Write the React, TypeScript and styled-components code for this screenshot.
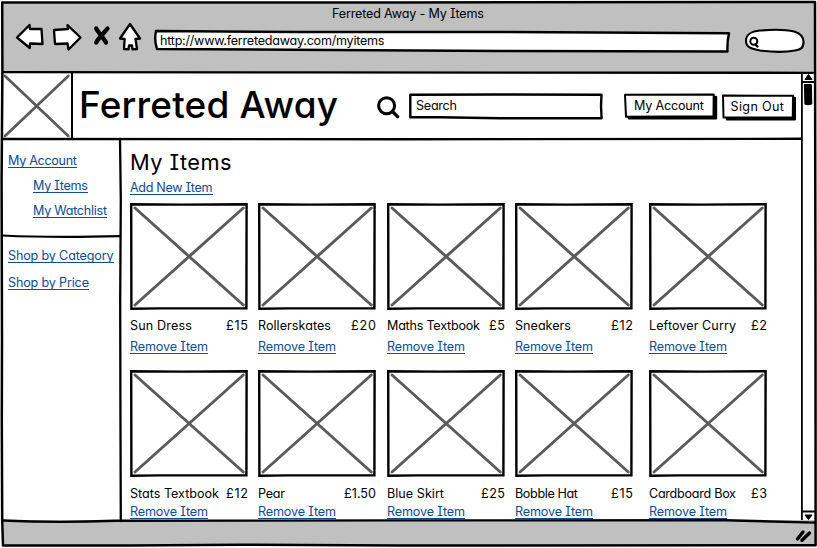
import React, { useLayoutEffect, useRef, useState } from "react";
import styled, { createGlobalStyle } from "styled-components";

const GlobalStyle = createGlobalStyle`
  *, *::before, *::after { box-sizing: border-box; }
  body { margin: 0; background: #fff; overflow: hidden; }
`;

/* ---------- text ---------- */

const TextSpan = styled.span<{ $size: number; $weight: number }>`
  display: inline-block;
  white-space: nowrap;
  font-size: ${(p) => p.$size}px;
  font-weight: ${(p) => p.$weight};
`;

type FitProps = { children: string; width: number; size?: number; weight?: number };

/* Spaces the letters so that the line takes the given width. */
function Fit({ children, width, size = 12.6, weight = 420 }: FitProps) {
  const ref = useRef<HTMLSpanElement>(null);
  const [spacing, setSpacing] = useState(0);
  useLayoutEffect(() => {
    if (!ref.current) return;
    const natural = ref.current.getBoundingClientRect().width;
    setSpacing((s) => s + (width - natural) / (children.length - 1 || 1));
  }, [children, width, size, weight]);
  return (
    <TextSpan
      ref={ref}
      $size={size}
      $weight={weight}
      style={{ letterSpacing: spacing, marginRight: -spacing }}
    >
      {children}
    </TextSpan>
  );
}

/* ---------- window ---------- */

const Window = styled.div`
  position: relative;
  display: flex;
  flex-direction: column;
  width: 817px;
  height: 548px;
  padding: 2px;
  overflow: hidden;
  color: #000;
  background: #fff;
  font-family: Inter, "Open Sans", sans-serif;
  font-size: 12.6px;
  font-feature-settings: "cv11" 1, "cv08" 1, "kern" 1;
  line-height: 16px;
`;

const Overlay = styled.svg`
  position: absolute;
  inset: 0;
  width: 100%;
  height: 100%;
  pointer-events: none;
  fill: none;
  stroke: #000;
  stroke-linecap: round;
  stroke-linejoin: round;
`;

const Chrome = styled.div`
  height: 70px;
  flex: none;
  background: #c0c0c0;
  padding-top: 4px;
`;

const WindowTitle = styled.div`
  text-align: center;
  height: 17px;
  padding-right: 1px;
`;

const Toolbar = styled.div`
  display: flex;
  align-items: flex-start;
  height: 34px;
`;

const NavIcons = styled.svg`
  flex: none;
  width: 151px;
  height: 34px;
  fill: #fff;
  stroke: #000;
  stroke-width: 2.3;
  stroke-linejoin: round;
  stroke-linecap: round;
`;

const Sketched = styled.div<{ $w: number; $h: number }>`
  position: relative;
  flex: none;
  width: ${(p) => p.$w}px;
  height: ${(p) => p.$h}px;
`;

const Sketch = styled.svg`
  position: absolute;
  inset: 0;
  width: 100%;
  height: 100%;
  overflow: visible;
  fill: #fff;
  stroke: #000;
  stroke-width: 2.4;
  stroke-linejoin: round;
  stroke-linecap: round;
`;

const Label = styled.div<{ $left: number; $top: number }>`
  position: relative;
  padding: ${(p) => p.$top}px 0 0 ${(p) => p.$left}px;
`;

const AddressBar = styled(Sketched)`
  margin-top: 7px;
`;

const ChromeSearch = styled(Sketched)`
  margin: 6px 0 0 15px;
`;

/* ---------- page ---------- */

const Viewport = styled.div`
  display: flex;
  flex: none;
  height: 448px;
  overflow: hidden;
`;

const Page = styled.div`
  width: 799px;
  flex: none;
  display: flex;
  flex-direction: column;
`;

const Header = styled.header`
  display: flex;
  align-items: flex-start;
  height: 68px;
  flex: none;
  background: #fff;
`;

const Logo = styled.svg`
  flex: none;
  width: 71px;
  height: 66px;
`;

const Brand = styled.h1`
  margin: 12px 0 0 6px;
  width: 262px;
  font-size: 37px;
  line-height: 42px;
  font-weight: 500;
`;

const SearchIcon = styled.svg`
  flex: none;
  width: 24px;
  height: 24px;
  margin: 23px 0 0 35px;
  fill: none;
  stroke: #000;
  stroke-linecap: round;
`;

const SearchField = styled(Sketched)`
  margin: 21px 0 0 9px;
`;

const HeaderButton = styled(Sketched)<{ $gap: number; $drop: number }>`
  margin: ${(p) => p.$drop}px 0 0 ${(p) => p.$gap}px;
`;

const Body = styled.div`
  display: flex;
  flex: 1;
  min-height: 0;
`;

const Sidebar = styled.nav`
  flex: none;
  width: 118px;
`;

const NavGroup = styled.div<{ $height: number; $top: number; $gap: number }>`
  display: flex;
  flex-direction: column;
  align-items: flex-start;
  gap: ${(p) => p.$gap}px;
  height: ${(p) => p.$height}px;
  padding: ${(p) => p.$top}px 0 0 6px;
`;

const LinkBox = styled.a<{ $width: number; $indent?: number }>`
  display: block;
  flex: none;
  width: ${(p) => p.$width}px;
  height: 16px;
  margin-left: ${(p) => p.$indent ?? 0}px;
  padding-top: 1px;
  line-height: 16px;
  color: #0e4b91;
  border-bottom: 1px solid #0e4b91;
  cursor: pointer;
`;

const Main = styled.main`
  flex: 1;
  padding: 10px 0 0 10px;
`;

const Heading = styled.h2`
  margin: 0 0 5px;
  height: 24px;
  font-size: 21.8px;
  line-height: 24px;
`;

const ItemRow = styled.div<{ $top: number }>`
  display: grid;
  grid-template-columns: 128px 129px 128px 134px 118px;
  margin-top: ${(p) => p.$top}px;
`;

const Item = styled.article`
  width: 118px;
`;

const Picture = styled.svg`
  display: block;
  width: 118px;
  height: 107px;
`;

const Caption = styled.div<{ $top: number; $bottom: number }>`
  display: flex;
  justify-content: space-between;
  height: 16px;
  margin: ${(p) => p.$top}px 0 ${(p) => p.$bottom}px;
`;

const ScrollTrack = styled.svg`
  flex: none;
  width: 14px;
  height: 448px;
`;

const StatusBar = styled.div`
  flex: 1;
  background: #c0c0c0;
`;

/* ---------- data ---------- */

type Row = { top: number; above: number; below: number; items: [string, number, string, number][] };

const rows: Row[] = [
  {
    top: 8,
    above: 8,
    below: 4,
    items: [
      ["Sun Dress", 62, "£15", 22],
      ["Rollerskates", 73, "£20", 25],
      ["Maths Textbook", 93, "£5", 16],
      ["Sneakers", 56, "£12", 22],
      ["Leftover Curry", 87, "£2", 16],
    ],
  },
  {
    top: 16,
    above: 9,
    below: 1,
    items: [
      ["Stats Textbook", 89, "£12", 22],
      ["Pear", 27, "£1.50", 32],
      ["Blue Skirt", 57, "£25", 24],
      ["Bobble Hat", 63, "£15", 22],
      ["Cardboard Box", 87, "£3", 16],
    ],
  },
];

function TextLink({ children, width, indent }: { children: string; width: number; indent?: number }) {
  return (
    <LinkBox $width={width} $indent={indent}>
      <Fit width={width}>{children}</Fit>
    </LinkBox>
  );
}

function Placeholder() {
  return (
    <Picture viewBox="0 0 118 107">
      <path d="M1.2 1.3 L52 1.6 L116.6 1.2 L116.4 105.4 L30 105.4 L1.4 105.8Z" fill="#fff" stroke="#000" strokeWidth="2.4" />
      <path d="M5 5 L113.3 102 M113.3 5 L5 102" stroke="#5a5a5a" strokeWidth="2.9" strokeLinecap="round" />
    </Picture>
  );
}

export default function App() {
  return (
    <>
      <GlobalStyle />
      <Window>
        <Chrome>
          <WindowTitle>
            <Fit width={152}>Ferreted Away - My Items</Fit>
          </WindowTitle>
          <Toolbar>
            <NavIcons viewBox="2 23 151 34">
              <path d="M17 37.5 L29.5 25 L30 29 L41.5 29 L42.5 44 L30 43.5 L29.8 48 Z" />
              <path d="M54 30 L68 29 L67.5 25.2 L80.5 37.5 L68.5 49.5 L67.5 43.5 L55 44 Z" />
              <path d="M96.2 28.5 C98.5 33 104 38.5 106 42.5 M107.5 28.5 C104 33 98.5 38 96.2 42.5" strokeWidth="4.3" />
              <path d="M130 24 L140 38.5 L135.5 39 L137 49 L132.5 49.3 L132 45.5 L129 45.5 L128.5 49.3 L124 49 L124.6 39 L120 38.5 Z" />
            </NavIcons>
            <AddressBar $w={577} $h={24}>
              <Sketch viewBox="153 30 577 24">
                <path d="M156 31 L300 32 L500 32 L729 33.2 Q727 42 727.5 51.5 L500 51 L330 50 L157 49 Q154 40 156 31Z" />
              </Sketch>
              <Label $left={7} $top={3}>
                <Fit width={224.5}>http://www.ferretedaway.com/myitems</Fit>
              </Label>
            </AddressBar>
            <ChromeSearch $w={60} $h={26}>
              <Sketch viewBox="745 29 60 26">
                <path d="M746 41 C746 34 751 31.5 760 30.5 C772 29.5 786 29.5 794 31.5 C801 33.5 803.5 37 803.5 42 C803.5 48 801 49.5 795 50.5 C785 52.5 771 52 760 50.5 C751 49 746 47 746 41Z" strokeWidth="2.1" />
                <circle cx="753.8" cy="41.3" r="3.5" strokeWidth="2" />
                <path d="M755.5 44.5 L757.5 46.5" strokeWidth="2.4" />
              </Sketch>
            </ChromeSearch>
          </Toolbar>
        </Chrome>

        <Viewport>
          <Page>
            <Header>
              <Logo viewBox="2 72 71 66">
                <path d="M5 76 L68.3 136 M68.3 76 L5 136" stroke="#5a5a5a" strokeWidth="2.7" strokeLinecap="round" />
              </Logo>
              <Brand>
                <Fit width={259} size={37} weight={500}>Ferreted Away</Fit>
              </Brand>
              <SearchIcon viewBox="376 95 24 24">
                <circle cx="386.6" cy="105.7" r="8" strokeWidth="3" />
                <path d="M392.7 111.7 L397.6 116.6" strokeWidth="3.4" />
              </SearchIcon>
              <SearchField $w={194} $h={27}>
                <Sketch viewBox="409 93 194 27">
                  <path d="M410.3 94.7 L500 94.5 L601.5 94.8 L601 106 L601.6 118.3 L500 118.3 L440 117.2 L410.3 117.3Z" />
                </Sketch>
                <Label $left={7} $top={5.4}>
                  <Fit width={41}>Search</Fit>
                </Label>
              </SearchField>
              <HeaderButton $w={93} $h={27} $gap={21} $drop={21}>
                <Sketch viewBox="624 93 93 27">
                  <path d="M629 97 H716 V118.3 H629Z" fill="#000" />
                  <path d="M625 94.7 L713.7 94.5 L713.5 116.2 L626 116.8Z" strokeWidth="2" />
                </Sketch>
                <Label $left={10} $top={5.4}>
                  <Fit width={70}>My Account</Fit>
                </Label>
              </HeaderButton>
              <HeaderButton $w={74} $h={27} $gap={5} $drop={22}>
                <Sketch viewBox="722 94 74 27">
                  <path d="M727 98 H794.8 V119.3 H727Z" fill="#000" />
                  <path d="M723 95.5 L793 95.8 L792.8 117.4 L723.5 117.4Z" strokeWidth="2" />
                </Sketch>
                <Label $left={8.5} $top={5.4}>
                  <Fit width={53.5}>Sign Out</Fit>
                </Label>
              </HeaderButton>
            </Header>

            <Body>
              <Sidebar>
                <NavGroup $height={96} $top={12} $gap={9}>
                  <TextLink width={69}>My Account</TextLink>
                  <TextLink width={55} indent={25}>My Items</TextLink>
                  <TextLink width={74} indent={25}>My Watchlist</TextLink>
                </NavGroup>
                <NavGroup $height={100} $top={11} $gap={11}>
                  <TextLink width={105.5}>Shop by Category</TextLink>
                  <TextLink width={81}>Shop by Price</TextLink>
                </NavGroup>
              </Sidebar>
              <Main>
                <Heading>
                  <Fit width={101.5} size={21.8}>My Items</Fit>
                </Heading>
                <TextLink width={82.5}>Add New Item</TextLink>
                {rows.map((row) => (
                  <ItemRow key={row.top} $top={row.top}>
                    {row.items.map(([name, nameWidth, price, priceWidth]) => (
                      <Item key={name}>
                        <Placeholder />
                        <Caption $top={row.above} $bottom={row.below}>
                          <Fit width={nameWidth}>{name}</Fit>
                          <Fit width={priceWidth}>{price}</Fit>
                        </Caption>
                        <TextLink width={78}>Remove Item</TextLink>
                      </Item>
                    ))}
                  </ItemRow>
                ))}
              </Main>
            </Body>
          </Page>
          <ScrollTrack viewBox="801 72 14 448">
            <path d="M801.9 73 V521 M802 82 H815 M802 511.5 H815" stroke="#000" strokeWidth="1.8" />
            <path d="M808.5 74.5 L812 79.5 H805Z M805 515 H812 L808.5 519.5Z" fill="#000" stroke="#000" />
            <path d="M804.8 84.8 H811 L811.4 103.7 Q808 105 805.2 103.7Z" fill="#000" stroke="#000" strokeWidth="1.8" strokeLinejoin="round" />
          </ScrollTrack>
        </Viewport>
        <StatusBar />

        <Overlay viewBox="0 0 817 548">
          <path d="M2.2 2.4 L400 2.4 L815 2 L815.2 140 L815.5 300 L815.6 545.3 L400 545.5 L240 544.8 L130 545.6 L3 545.5 L2.2 520 L1.8 420 L2 340 L1.6 180 L2.4 70Z" strokeWidth="2.5" />
          <path d="M3 72.2 L300 72.4 L813 72.8" strokeWidth="2.3" />
          <path d="M72 73 V138" strokeWidth="2" />
          <path d="M3 139 L400 139.2 L801 138.8" strokeWidth="2.4" />
          <path d="M120 139 L120.8 200 L120.2 300 L120.4 400 L120.8 521" strokeWidth="2.3" />
          <path d="M3 235.5 Q50 238 120 236.2" strokeWidth="2.2" />
          <path d="M3 520.5 Q55 523 115 520.8 L400 520.4 L725 520.2 L815 522.6" strokeWidth="2.4" />
          <path d="M797.5 539 L803 532 M802 540.3 L809.5 533" strokeWidth="3.4" />
        </Overlay>
      </Window>
    </>
  );
}
